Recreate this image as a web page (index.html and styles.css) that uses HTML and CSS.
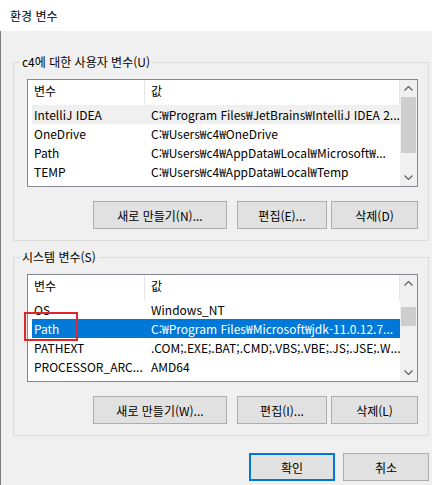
FILE: index.html
```html
<!DOCTYPE html>
<html lang="ko">
<head>
<meta charset="utf-8">
<title>환경 변수</title>
<link rel="stylesheet" href="styles.css">
</head>
<body>
<div class="window">
  <div class="titlebar">환경 변수</div>
  <div class="client">
    <div class="group">
      <div class="group-title">c4에 대한 사용자 변수(U)</div>
      <div class="listbox">
        <div class="list-main">
          <div class="list-header"><div class="hcell name">변수</div><div class="hcell value">값</div></div>
          <div class="row inactive"><span class="cell name">IntelliJ IDEA</span><span class="cell value">C:₩Program Files₩JetBrains₩IntelliJ IDEA 2...</span></div>
          <div class="row"><span class="cell name">OneDrive</span><span class="cell value">C:₩Users₩c4₩OneDrive</span></div>
          <div class="row"><span class="cell name">Path</span><span class="cell value">C:₩Users₩c4₩AppData₩Local₩Microsoft₩...</span></div>
          <div class="row"><span class="cell name">TEMP</span><span class="cell value">C:₩Users₩c4₩AppData₩Local₩Temp</span></div>
          <div class="row"><span class="cell name">TMP</span><span class="cell value">C:₩Users₩c4₩AppData₩Local₩Temp</span></div>
        </div>
        <div class="scrollbar">
          <div class="arrow"><svg width="9" height="5" viewBox="0 0 9 5"><polyline points="0.5,4.5 4.5,0.5 8.5,4.5" fill="none" stroke="#606060" stroke-width="1.2"/></svg></div>
          <div class="track"><div class="thumb" style="margin-top:0px;height:56px"></div></div>
          <div class="arrow"><svg width="9" height="5" viewBox="0 0 9 5"><polyline points="0.5,0.5 4.5,4.5 8.5,0.5" fill="none" stroke="#606060" stroke-width="1.2"/></svg></div>
        </div>
      </div>
      <div class="buttons">
        <button class="btn btn-new">새로 만들기(N)...</button>
        <button class="btn btn-edit">편집(E)...</button>
        <button class="btn btn-del">삭제(D)</button>
      </div>
    </div>

    <div class="group group-system">
      <div class="group-title">시스템 변수(S)</div>
      <div class="listbox">
        <div class="list-main">
          <div class="list-header"><div class="hcell name">변수</div><div class="hcell value">값</div></div>
          <div class="row"><span class="cell name">OS</span><span class="cell value">Windows_NT</span></div>
          <div class="row selected"><span class="cell name">Path</span><span class="cell value">C:₩Program Files₩Microsoft₩jdk-11.0.12.7...</span></div>
          <div class="row"><span class="cell name">PATHEXT</span><span class="cell value">.COM;.EXE;.BAT;.CMD;.VBS;.VBE;.JS;.JSE;.W...</span></div>
          <div class="row"><span class="cell name">PROCESSOR_ARC...</span><span class="cell value">AMD64</span></div>
          <div class="row"><span class="cell name">PROCESSOR_IDE...</span><span class="cell value">Intel64 Family 6 Model 158 Stepping 10, G...</span></div>
        </div>
        <div class="scrollbar">
          <div class="arrow"><svg width="9" height="5" viewBox="0 0 9 5"><polyline points="0.5,4.5 4.5,0.5 8.5,4.5" fill="none" stroke="#606060" stroke-width="1.2"/></svg></div>
          <div class="track"><div class="thumb" style="margin-top:15px;height:19px"></div></div>
          <div class="arrow"><svg width="9" height="5" viewBox="0 0 9 5"><polyline points="0.5,0.5 4.5,4.5 8.5,0.5" fill="none" stroke="#606060" stroke-width="1.2"/></svg></div>
        </div>
        <div class="highlight-box"></div>
      </div>
      <div class="buttons">
        <button class="btn btn-new">새로 만들기(W)...</button>
        <button class="btn btn-edit">편집(I)...</button>
        <button class="btn btn-del">삭제(L)</button>
      </div>
    </div>

    <div class="dialog-buttons">
      <button class="btn btn-dialog btn-default">확인</button>
      <button class="btn btn-dialog">취소</button>
    </div>
  </div>
</div>
</body>
</html>
```

FILE: styles.css
```css
* {
  box-sizing: border-box;
}

html, body {
  margin: 0;
  padding: 0;
}

body {
  width: 432px;
  height: 485px;
  overflow: hidden;
  background: #f0f0f0;
  font-family: "Noto Sans CJK KR", "Noto Sans", sans-serif;
  font-size: 12px;
  color: #000;
}

.window {
  display: flex;
  flex-direction: column;
  height: 485px;
}

.titlebar {
  height: 31px;
  line-height: 31px;
  padding-left: 10px;
  background: #ffffff;
  font-size: 12px;
}

.client {
  flex: 1;
  border-left: 1px solid #7a7a7a;
  padding: 31px 3px 0 12px;
}

.group {
  border: 1px solid #dcdcdc;
  padding: 0 10px 11px 13px;
}

.group-system {
  margin-top: 16px;
}

.group-title {
  width: max-content;
  height: 16px;
  line-height: 16px;
  margin: -9px 0 0 -7px;
  padding: 0 2px;
  background: #f0f0f0;
}

.listbox {
  position: relative;
  display: flex;
  width: 391px;
  height: 108px;
  margin-top: 9px;
  border: 1px solid #828790;
  background: #ffffff;
}

.list-main {
  flex: 1;
  min-width: 0;
  overflow: hidden;
}

.list-header {
  display: flex;
  height: 25px;
}

.hcell {
  height: 25px;
  line-height: 22px;
  padding-left: 6px;
  border-right: 1px solid #e5e5e5;
  white-space: nowrap;
}

.hcell.name {
  width: 117px;
}

.hcell.value {
  flex: 1;
}

.row {
  display: flex;
  height: 19px;
  line-height: 19px;
  margin-left: 4px;
  white-space: nowrap;
}

.cell {
  overflow: hidden;
}

.cell.name {
  flex: none;
  width: 113px;
  padding-left: 2px;
}

.cell.value {
  flex: 1;
  padding-left: 6px;
}

.row.inactive {
  background: #f0f0f0;
}

.row.selected {
  background: #0078d7;
  color: #ffffff;
}

.scrollbar {
  display: flex;
  flex-direction: column;
  width: 17px;
  background: #f0f0f0;
}

.arrow {
  height: 17px;
  display: flex;
  align-items: center;
  justify-content: center;
}

.arrow svg {
  display: block;
}

.track {
  flex: 1;
  padding: 0 1px;
}

.thumb {
  background: #cdcdcd;
}

.highlight-box {
  position: absolute;
  left: -4px;
  top: 37px;
  width: 54px;
  height: 29px;
  border: 2px solid #e0262d;
}

.buttons {
  display: flex;
  justify-content: flex-end;
  margin-top: 14px;
}

.btn {
  height: 28px;
  margin: 0;
  padding: 0;
  border: 1px solid #adadad;
  background: #e1e1e1;
  font-family: "Noto Sans CJK KR", "Noto Sans", sans-serif;
  font-size: 12px;
  color: #000;
  text-align: center;
}

.btn-new {
  width: 134px;
}

.btn-edit {
  width: 90px;
  margin-left: 10px;
}

.btn-del {
  width: 87px;
  margin-left: 4px;
}

.dialog-buttons {
  display: flex;
  justify-content: flex-end;
  gap: 8px;
  margin-top: 17px;
}

.btn-dialog {
  width: 86px;
}

.btn-default {
  border: 2px solid #0078d7;
}
```
